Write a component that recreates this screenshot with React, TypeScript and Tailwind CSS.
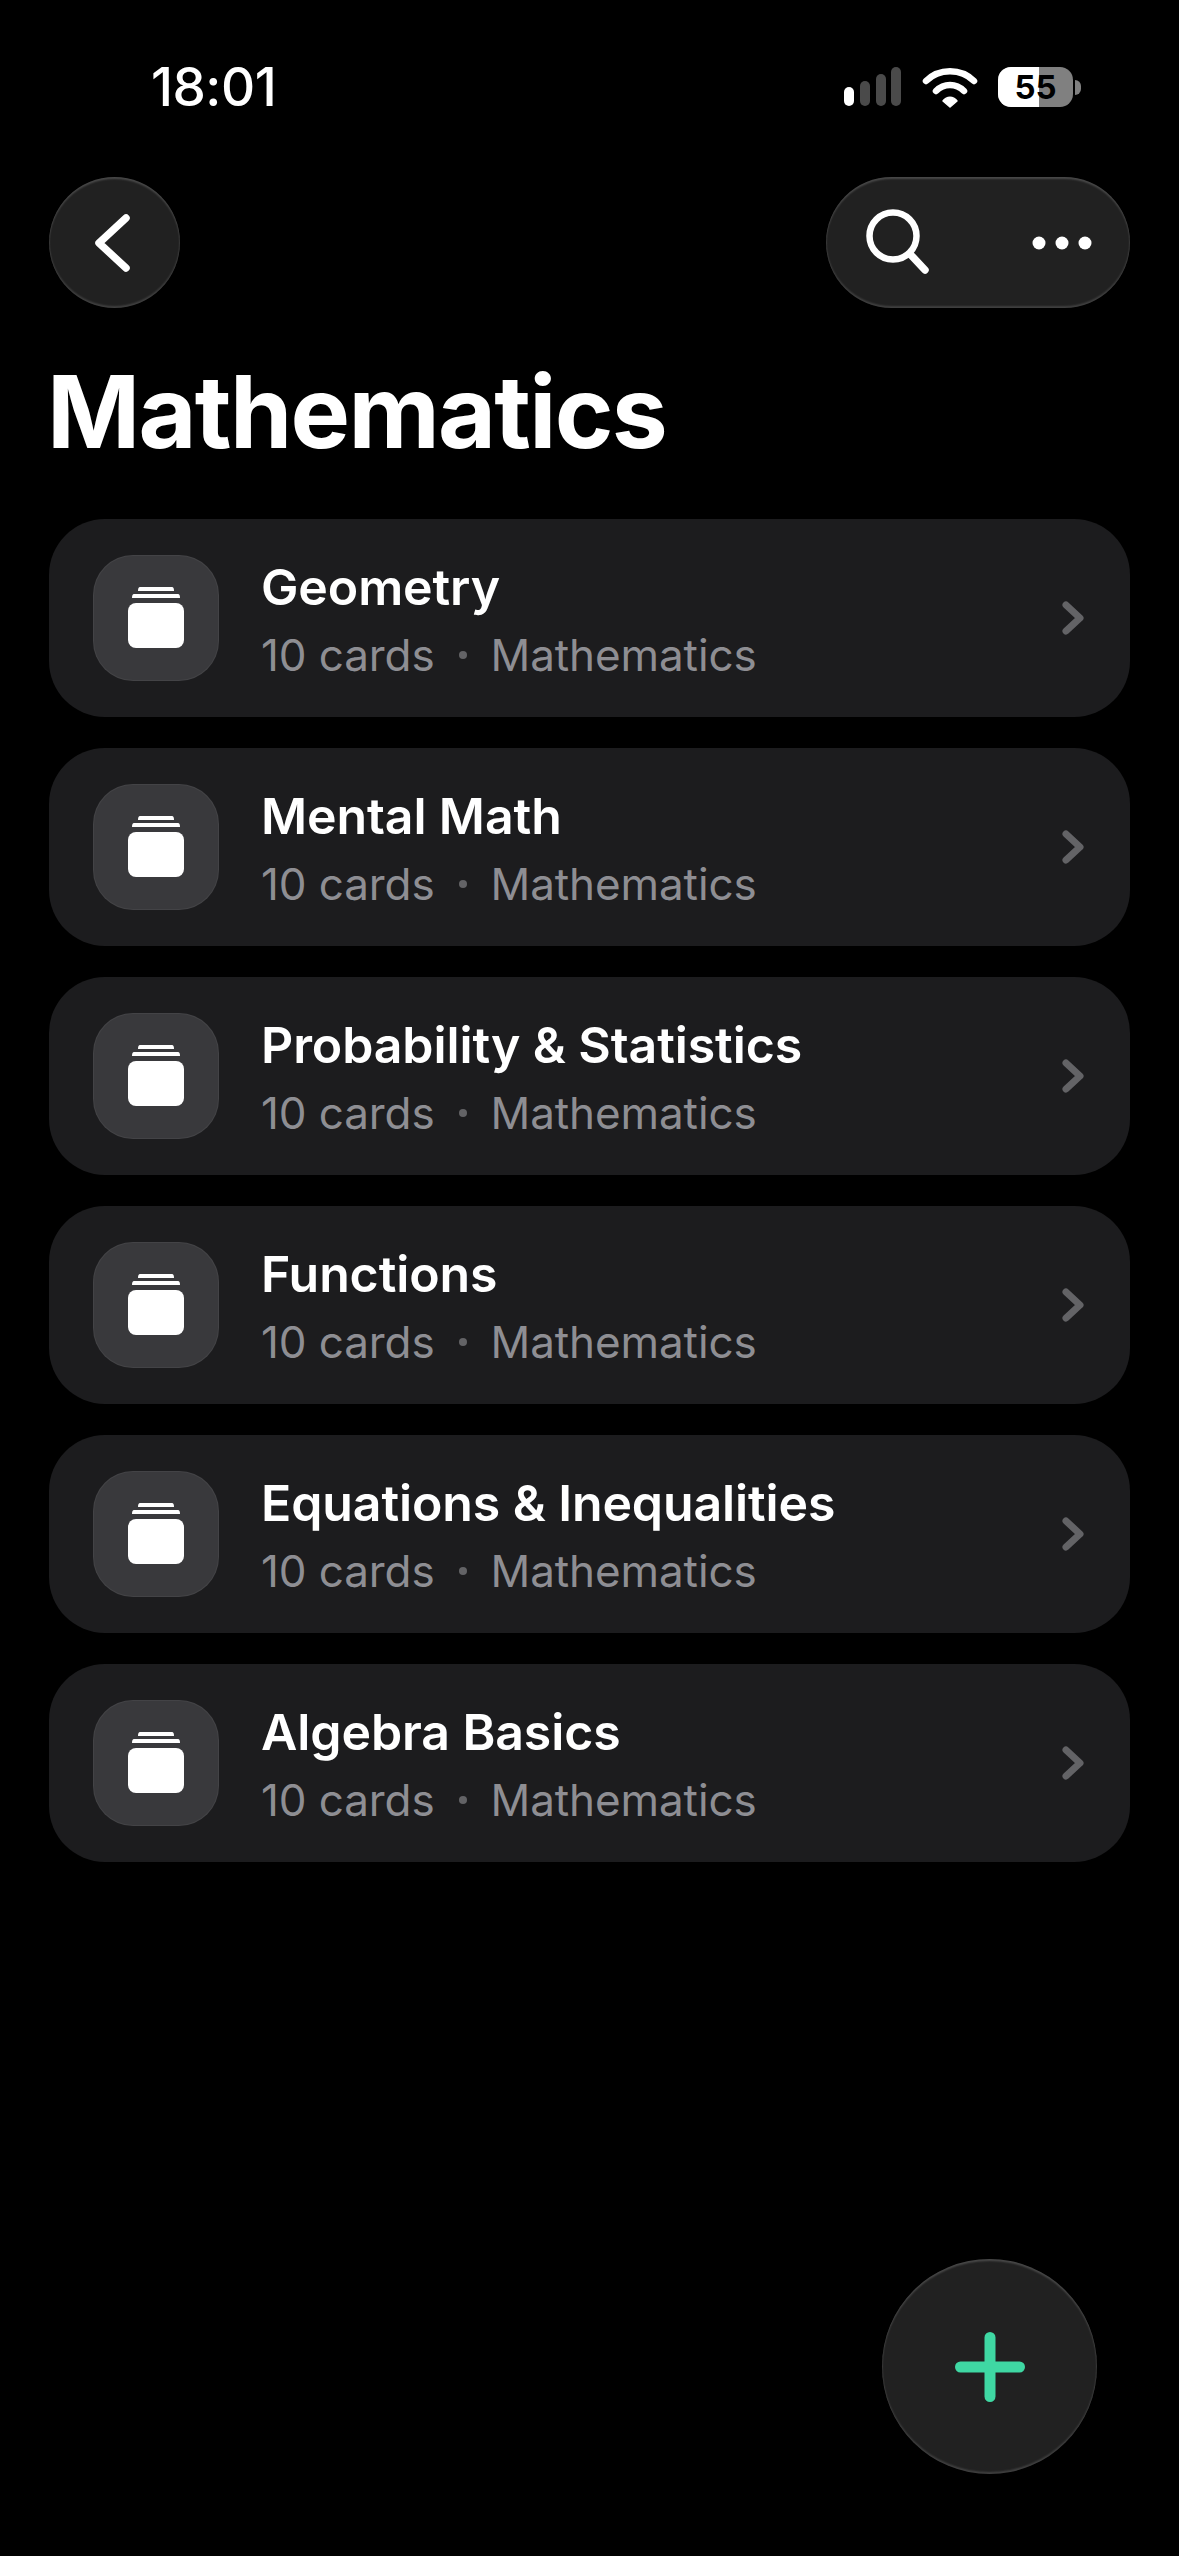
import React from 'react';

const decks = [
  'Geometry',
  'Mental Math',
  'Probability & Statistics',
  'Functions',
  'Equations & Inequalities',
  'Algebra Basics',
];

function StatusIcons() {
  return (
    <div className="flex items-center">
      <svg width="60" height="40" viewBox="0 0 60 40">
        <rect x="1" y="20" width="10" height="19" rx="5" fill="#fff" />
        <rect x="17" y="14" width="10" height="25" rx="5" fill="#4a4a4a" />
        <rect x="33" y="7" width="10" height="32" rx="5" fill="#4a4a4a" />
        <rect x="48" y="0" width="10" height="39" rx="5" fill="#4a4a4a" />
      </svg>
      <svg width="56" height="42" viewBox="0 0 56 42" className="ml-[19px]" fill="none" stroke="#fff" strokeWidth="6.5" strokeLinecap="round">
        <path d="M4 15 C17 2 39 2 52 15" />
        <path d="M14 25 C22 17 34 17 42 25" />
        <path d="M21 35 L28 41 L35 35 C31 30 25 30 21 35 Z" fill="#fff" strokeWidth="1.5" strokeLinejoin="round" />
      </svg>
      <div className="ml-[20px] relative w-[75px] h-[40px] rounded-[13px] overflow-hidden bg-[#808080] flex items-center justify-center">
        <div className="absolute left-0 top-0 bottom-0 w-[41px] bg-white" />
        <span className="relative text-[33px] leading-none font-bold text-black">55</span>
      </div>
      <div className="ml-[2px] w-[6px] h-[15px] rounded-r-full bg-[#808080]" />
    </div>
  );
}

function DeckIcon() {
  return (
    <div className="w-[126px] h-[126px] rounded-[40px] bg-[#39393c] border border-white/5 flex items-center justify-center shrink-0">
      <svg width="56" height="62" viewBox="0 0 56 62" fill="#fff">
        <path d="M12 0 H44 Q46 0 46 4 H10 Q10 0 12 0 Z" />
        <path d="M6 7 H50 Q52 7 52 11 H4 Q4 7 6 7 Z" />
        <rect x="0" y="16" width="56" height="45" rx="8" />
      </svg>
    </div>
  );
}

function DeckRow({ title }: { title: string }) {
  return (
    <div className="h-[198px] rounded-[56px] bg-[#1c1c1e] flex items-center pl-[44px] pr-[46px]">
      <DeckIcon />
      <div className="ml-[42px] pt-[2px] flex-1 min-w-0">
        <div className="text-[50px] leading-[60px] font-[560] tracking-[-0.1px] text-white">{title}</div>
        <div className="mt-[11px] flex items-center text-[44px] leading-[54px] text-[#8e8e93] tracking-[-0.1px]">
          <span>10 cards</span>
          <span className="mx-[24px] w-[8px] h-[8px] rounded-full bg-[#636366]" />
          <span>Mathematics</span>
        </div>
      </div>
      <svg width="22" height="34" viewBox="0 0 22 34" fill="none" stroke="#636366" strokeWidth="7" strokeLinecap="round" strokeLinejoin="round">
        <path d="M4 4 L18 17 L4 30" />
      </svg>
    </div>
  );
}

export default function App() {
  return (
    <div className="relative w-[1179px] h-[2556px] overflow-hidden bg-black text-white font-['Inter','Liberation_Sans',sans-serif]">
      <div className="pt-[60px] h-[114px] flex items-center justify-between pl-[151px] pr-[98px]">
        <span className="text-[53px] leading-none font-medium tracking-[-0.5px]">18:01</span>
        <StatusIcons />
      </div>

      <div className="mt-[63px] px-[49px] flex items-center justify-between">
        <button className="w-[131px] h-[131px] rounded-full bg-[#212121] shadow-[inset_0_2px_2px_rgba(255,255,255,0.18),inset_0_-2px_2px_rgba(255,255,255,0.14)] flex items-center justify-center">
          <svg width="40" height="60" viewBox="0 0 40 60" fill="none" stroke="#fff" strokeWidth="7.5" strokeLinecap="round" strokeLinejoin="round" className="-ml-[4px]">
            <path d="M33 5 L6 30 L33 55" />
          </svg>
        </button>
        <div className="w-[304px] h-[131px] rounded-full bg-[#212121] shadow-[inset_0_2px_2px_rgba(255,255,255,0.18),inset_0_-2px_2px_rgba(255,255,255,0.14)] flex items-center justify-between pl-[40px] pr-[38px]">
          <svg width="66" height="68" viewBox="0 0 66 68" fill="none" stroke="#fff" strokeWidth="6.5" strokeLinecap="round">
            <circle cx="27" cy="27" r="23.5" />
            <path d="M44 45 L59 61" strokeWidth="7.5" />
          </svg>
          <svg width="60" height="14" viewBox="0 0 60 14" fill="#fff">
            <circle cx="7" cy="7" r="6.5" />
            <circle cx="30" cy="7" r="6.5" />
            <circle cx="53" cy="7" r="6.5" />
          </svg>
        </div>
      </div>

      <h1 className="mt-[44px] pl-[47px] text-[100px] leading-[120px] font-bold tracking-[-1.7px]">Mathematics</h1>

      <div className="mt-[47px] px-[49px] flex flex-col gap-[31px]">
        {decks.map((d) => (
          <DeckRow key={d} title={d} />
        ))}
      </div>

      <button className="absolute left-[882px] top-[2259px] w-[215px] h-[215px] rounded-full bg-[#212121] shadow-[inset_0_2px_2px_rgba(255,255,255,0.18),inset_0_-2px_2px_rgba(255,255,255,0.14)] flex items-center justify-center">
        <svg width="70" height="70" viewBox="0 0 70 70" fill="none" stroke="#3fd8a3" strokeWidth="11" strokeLinecap="round">
          <path d="M35 5.5 V64.5 M5.5 35 H64.5" />
        </svg>
      </button>
    </div>
  );
}
